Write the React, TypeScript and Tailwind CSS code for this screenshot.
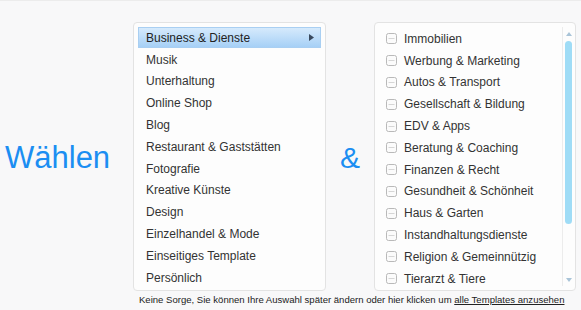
const categories = [
  "Business & Dienste",
  "Musik",
  "Unterhaltung",
  "Online Shop",
  "Blog",
  "Restaurant & Gaststätten",
  "Fotografie",
  "Kreative Künste",
  "Design",
  "Einzelhandel & Mode",
  "Einseitiges Template",
  "Persönlich",
];

const subcategories = [
  "Immobilien",
  "Werbung & Marketing",
  "Autos & Transport",
  "Gesellschaft & Bildung",
  "EDV & Apps",
  "Beratung & Coaching",
  "Finanzen & Recht",
  "Gesundheit & Schönheit",
  "Haus & Garten",
  "Instandhaltungsdienste",
  "Religion & Gemeinnützig",
  "Tierarzt & Tiere",
];

function CheckBox() {
  return (
    <svg width="11" height="11" viewBox="0 0 11 11" className="shrink-0">
      <rect x="0.5" y="0.5" width="10" height="10" rx="2" fill="#fbfbfb" stroke="#b9b9b9" />
      <line x1="2.5" y1="5.5" x2="8.5" y2="5.5" stroke="#d6d6d6" />
    </svg>
  );
}

export default function App() {
  return (
    <div className="w-[581px] h-[310px] overflow-hidden bg-[#f8f8f9] border-t border-[#ececec] pt-[21px] font-['Liberation_Sans',Arial,sans-serif] text-[#333]">
      <div className="flex">
        <div className="w-[133px] flex items-center pl-[5px] pt-[3px] text-[31px] text-[#1b8ef2]">
          Wählen
        </div>

        <div className="w-[193px] h-[269px] rounded-[4px] border border-[#e3e3e3] bg-[#fdfdfd] px-[4px] pt-[4px]">
          {categories.map((c, i) => (
            <div
              key={c}
              className={
                i === 0
                  ? "h-[21px] mb-[0.8px] flex items-center justify-between pl-[7px] pr-[6px] border border-[#a9cff2] bg-gradient-to-b from-[#d6eafc] to-[#a6d0f6] text-[12px] text-[#222]"
                  : "h-[21.8px] flex items-center pl-[8px] text-[12px]"
              }
            >
              <span>{c}</span>
              {i === 0 && (
                <svg width="5" height="7" viewBox="0 0 5 7">
                  <path d="M0 0 L5 3.5 L0 7 Z" fill="#3a4a5e" />
                </svg>
              )}
            </div>
          ))}
        </div>

        <div className="w-[48px] flex items-center justify-center pt-[1px] text-[30px] text-[#1b8ef2]">
          &amp;
        </div>

        <div className="w-[202px] h-[269px] rounded-[4px] border border-[#e3e3e3] bg-[#fdfdfd] flex">
          <div className="flex-1 pt-[5px] pl-[11px]">
            {subcategories.map((s) => (
              <div key={s} className="h-[21.8px] flex items-center gap-[7px] text-[12px]">
                <CheckBox />
                <span>{s}</span>
              </div>
            ))}
          </div>
          <div className="w-[12px] my-[4px] mr-[1px] border-l border-[#ececec] flex flex-col items-center">
            <svg width="6" height="4" viewBox="0 0 6 4" className="mt-[5px]">
              <path d="M0 4 L3 0 L6 4 Z" fill="#a9c4d8" />
            </svg>
            <div className="mt-[5px] w-[7px] h-[183px] rounded-full bg-[#9fdcf6]" />
            <div className="flex-1" />
            <svg width="6" height="4" viewBox="0 0 6 4" className="mb-[4px]">
              <path d="M0 0 L6 0 L3 4 Z" fill="#a9c4d8" />
            </svg>
          </div>
        </div>
      </div>

      <p className="ml-[139px] mt-[3px] text-[9.55px] leading-[12px] text-[#222] whitespace-nowrap">
        Keine Sorge, Sie können Ihre Auswahl später ändern oder hier klicken um{" "}
        <span className="underline">alle Templates anzusehen</span>
      </p>
    </div>
  );
}
